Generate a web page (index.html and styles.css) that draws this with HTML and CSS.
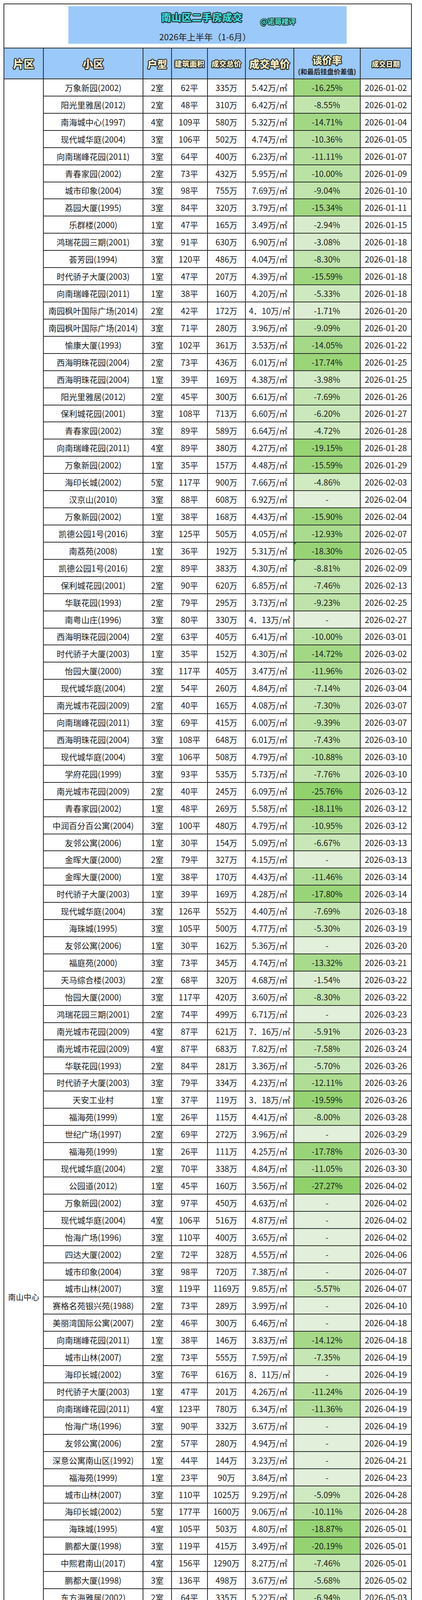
FILE: index.html
```html
<!DOCTYPE html>
<html lang="zh-CN">
<head>
<meta charset="utf-8">
<title>南山区二手房成交</title>
<link rel="stylesheet" href="styles.css">
</head>
<body>
<div class="sheet">
  <div class="grid" id="grid">
    <div class="title-cell">
      <div class="band">
        <div class="title">南山区二手房成交</div>
        <div class="sub">2026年上半年（1-6月）</div>
        <div class="handle">@诺哥楼评</div>
      </div>
    </div>
    <div class="hd"><span class="ht s27">片区</span></div>
    <div class="hd"><span class="ht s27 peach">小区</span></div>
    <div class="hd"><span class="ht s25">户型</span></div>
    <div class="hd"><span class="ht s19">建筑面积</span></div>
    <div class="hd"><span class="ht s19">成交总价</span></div>
    <div class="hd"><span class="ht s26">成交单价</span></div>
    <div class="hd hd-rate"><span class="ht s25 lh28">谈价率</span><span class="note">(和最后挂盘价差值)</span></div>
    <div class="hd"><span class="ht s18">成交日期</span></div>
    <div class="c area">南山中心</div>
  </div>
  <div class="ghost"><div></div><div></div><div></div><div></div><div></div><div></div><div></div><div></div></div>
</div>
<script src="script.js"></script>
</body>
</html>
```

FILE: styles.css
```css
* { box-sizing: border-box; }
body {
  margin: 0;
  background: #ffffff;
  font-family: "Noto Sans CJK SC", "Noto Sans", "Liberation Sans", sans-serif;
  color: #1a1a1a;
}
.sheet {
  padding: 9px 0 0 9px;
}
.grid {
  display: grid;
  grid-template-columns: 99px 253px 71px 90px 95px 122px 168px 129px;
  grid-template-rows: 111px 77px;
  grid-auto-rows: 41.93px;
  gap: 2px;
  padding: 2px;
  background: #2b2b2b;
  width: max-content;
}
.title-cell {
  grid-column: 1 / -1;
  background: #ffffff;
  padding: 5px 0 0 164px;
}
.band {
  position: relative;
  width: 712px;
  height: 96px;
  background: #9bc9f9;
  display: flex;
  flex-direction: column;
  align-items: center;
}
.title {
  margin-top: 14px;
  margin-right: 28px;
  font-size: 25px;
  line-height: 27px;
  font-weight: 900;
  letter-spacing: 1px;
  color: #3cdcdc;
  text-shadow:
    2px 0 0 #1b2323, -2px 0 0 #1b2323, 0 2px 0 #1b2323, 0 -2px 0 #1b2323,
    1.5px 1.5px 0 #1b2323, -1.5px 1.5px 0 #1b2323, 1.5px -1.5px 0 #1b2323, -1.5px -1.5px 0 #1b2323;
}
.sub {
  margin-top: 24px;
  margin-right: 12px;
  font-size: 22px;
  line-height: 24px;
  color: #222222;
}
.handle {
  position: absolute;
  left: 491px;
  top: 28px;
  font-size: 18px;
  line-height: 20px;
  font-weight: 900;
  color: #4fd8c8;
  text-shadow:
    1.5px 0 0 #1b2323, -1.5px 0 0 #1b2323, 0 1.5px 0 #1b2323, 0 -1.5px 0 #1b2323,
    1px 1px 0 #1b2323, -1px 1px 0 #1b2323, 1px -1px 0 #1b2323, -1px -1px 0 #1b2323;
}
.hd {
  background: #9bc9f9;
  display: flex;
  align-items: center;
  justify-content: center;
}
.hd-rate {
  flex-direction: column;
  justify-content: flex-start;
  padding-top: 15px;
  gap: 6px;
}
.ht {
  font-weight: 900;
  color: #f4eec2;
  white-space: nowrap;
  text-shadow:
    2px 0 0 #1c1c1c, -2px 0 0 #1c1c1c, 0 2px 0 #1c1c1c, 0 -2px 0 #1c1c1c,
    1.5px 1.5px 0 #1c1c1c, -1.5px 1.5px 0 #1c1c1c, 1.5px -1.5px 0 #1c1c1c, -1.5px -1.5px 0 #1c1c1c;
}
.peach { color: #f7e6cc; }
.s27 { font-size: 27px; }
.s26 { font-size: 26px; }
.s25 { font-size: 25px; }
.s19 { font-size: 19px; }
.s18 { font-size: 18px; }
.lh28 { line-height: 28px; }
.note {
  font-size: 17px;
  line-height: 20px;
  font-weight: 700;
  color: #222222;
  white-space: nowrap;
}
.c {
  background: #ffffff;
  display: flex;
  align-items: center;
  justify-content: center;
  font-size: 21px;
  color: #1a1a1a;
  white-space: nowrap;
}
.area {
  grid-column: 1;
  grid-row: 3 / span 142;
  font-size: 20px;
}
.rate { position: relative; }
.flag::before {
  content: "";
  position: absolute;
  top: 0;
  left: 0;
  border-top: 6px solid #1f7a3c;
  border-right: 6px solid transparent;
}
.ghost {
  display: grid;
  grid-template-columns: 99px 253px 71px 90px 95px 122px 168px 129px;
  gap: 2px;
  padding: 0 2px;
  height: 24px;
  background: #ececec;
  width: max-content;
}
.ghost div { background: #ffffff; }
```

FILE: script.js
```js
(function () {
  var data = [
    "万象新园(2002)|2|62|335|5.42|-16.25|01-02",
    "阳光里雅居(2012)|2|48|310|6.42|-8.55|01-02",
    "南海城中心(1997)|4|109|580|5.32|-14.71|01-04",
    "现代城华庭(2004)|3|106|502|4.74|-10.36|01-05",
    "向南瑞峰花园(2011)|3|64|400|6.23|-11.11|01-07",
    "青春家园(2002)|2|73|432|5.95|-10.00|01-09",
    "城市印象(2004)|3|98|755|7.69|-9.04|01-10",
    "荔园大厦(1995)|3|84|320|3.79|-15.34|01-11",
    "乐群楼(2000)|1|47|165|3.49|-2.94|01-15",
    "鸿瑞花园三期(2001)|3|91|630|6.90|-3.08|01-18",
    "荟芳园(1994)|3|120|486|4.04|-8.30|01-18",
    "时代骄子大厦(2003)|1|47|207|4.39|-15.59|01-18",
    "向南瑞峰花园(2011)|1|38|160|4.20|-5.33|01-18",
    "南园枫叶国际广场(2014)|2|42|172|4．10|-1.71|01-20",
    "南园枫叶国际广场(2014)|3|71|280|3.96|-9.09|01-20",
    "愉康大厦(1993)|3|102|361|3.53|-14.05|01-22",
    "西海明珠花园(2004)|2|73|436|6.01|-17.74|01-25",
    "西海明珠花园(2004)|1|39|169|4.38|-3.98|01-25",
    "阳光里雅居(2012)|2|45|300|6.61|-7.69|01-26",
    "保利城花园(2001)|3|108|713|6.60|-6.20|01-27",
    "青春家园(2002)|3|89|589|6.64|-4.72|01-28",
    "向南瑞峰花园(2011)|4|89|380|4.27|-19.15|01-28",
    "万象新园(2002)|1|35|157|4.48|-15.59|01-29",
    "海印长城(2002)|5|117|900|7.66|-4.86|02-03",
    "汉京山(2010)|3|88|608|6.92|-|02-04",
    "万象新园(2002)|1|38|168|4.43|-15.90|02-04",
    "凯德公园1号(2016)|3|125|505|4.05|-12.93|02-07",
    "南荔苑(2008)|1|36|192|5.31|-18.30|02-05",
    "凯德公园1号(2016)|2|89|383|4.30|-8.81|02-09",
    "保利城花园(2001)|2|90|620|6.85|-7.46|02-13",
    "华联花园(1993)|2|79|295|3.73|-9.23|02-25",
    "南粤山庄(1996)|3|80|330|4．13|-|02-27",
    "西海明珠花园(2004)|2|63|405|6.41|-10.00|03-01",
    "时代骄子大厦(2003)|1|35|152|4.30|-14.72|03-02",
    "怡园大厦(2000)|3|117|405|3.47|-11.96|03-02",
    "现代城华庭(2004)|2|54|260|4.84|-7.14|03-04",
    "南光城市花园(2009)|2|40|165|4.08|-7.30|03-07",
    "向南瑞峰花园(2011)|3|69|415|6.00|-9.39|03-07",
    "西海明珠花园(2004)|3|108|648|6.01|-7.43|03-10",
    "现代城华庭(2004)|3|106|508|4.79|-10.88|03-10",
    "学府花园(1999)|3|93|535|5.73|-7.76|03-10",
    "南光城市花园(2009)|2|40|245|6.09|-25.76|03-12",
    "青春家园(2002)|1|48|269|5.58|-18.11|03-12",
    "中润百分百公寓(2004)|3|100|480|4.79|-10.95|03-12",
    "友邻公寓(2006)|1|30|154|5.09|-6.67|03-13",
    "金晖大厦(2000)|2|79|327|4.15|-|03-13",
    "金晖大厦(2000)|1|38|170|4.43|-11.46|03-14",
    "时代骄子大厦(2003)|1|39|169|4.28|-17.80|03-14",
    "现代城华庭(2004)|3|126|552|4.40|-7.69|03-18",
    "海珠城(1995)|3|105|500|4.77|-5.30|03-19",
    "友邻公寓(2006)|1|30|162|5.36|-|03-20",
    "福庭苑(2000)|3|73|345|4.74|-13.32|03-21",
    "天马综合楼(2003)|2|68|320|4.68|-1.54|03-22",
    "怡园大厦(2000)|3|117|420|3.60|-8.30|03-22",
    "鸿瑞花园三期(2001)|2|74|499|6.71|-|03-23",
    "南光城市花园(2009)|4|87|621|7．16|-5.91|03-23",
    "南光城市花园(2009)|4|87|683|7.82|-7.58|03-24",
    "华联花园(1993)|2|84|281|3.36|-5.70|03-26",
    "时代骄子大厦(2003)|3|79|334|4.23|-12.11|03-26",
    "天安工业村|1|37|119|3．18|-19.59|03-26",
    "福海苑(1999)|1|26|115|4.41|-8.00|03-28",
    "世纪广场(1997)|2|69|272|3.96|-|03-29",
    "福海苑(1999)|1|26|111|4.25|-17.78|03-30",
    "现代城华庭(2004)|2|70|338|4.84|-11.05|03-30",
    "公园道(2012)|1|45|160|3.56|-27.27|04-02",
    "万象新园(2002)|3|97|450|4.63|-|04-02",
    "现代城华庭(2004)|4|106|516|4.87|-|04-02",
    "怡海广场(1996)|3|110|400|3.65|-|04-02",
    "四达大厦(2002)|2|72|328|4.55|-|04-06",
    "城市印象(2004)|3|98|720|7.38|-|04-07",
    "城市山林(2007)|3|119|1169|9.85|-5.57|04-07",
    "赛格名苑银兴苑(1988)|2|73|289|3.99|-|04-10",
    "美丽湾国际公寓(2007)|2|46|300|6.46|-|04-18",
    "向南瑞峰花园(2011)|1|38|146|3.83|-14.12|04-18",
    "城市山林(2007)|2|73|555|7.59|-7.35|04-19",
    "海印长城(2002)|3|76|616|8．11|-|04-19",
    "时代骄子大厦(2003)|1|47|201|4.26|-11.24|04-19",
    "向南瑞峰花园(2011)|4|123|780|6.34|-11.36|04-19",
    "怡海广场(1996)|3|90|332|3.67|-|04-19",
    "友邻公寓(2006)|2|57|280|4.94|-|04-19",
    "深意公寓南山区(1992)|1|44|144|3.23|-|04-21",
    "福海苑(1999)|1|23|90|3.84|-|04-23",
    "城市山林(2007)|3|110|1025|9.29|-5.09|04-28",
    "海印长城(2002)|5|177|1600|9.06|-10.11|04-28",
    "海珠城(1995)|4|105|503|4.80|-18.87|05-01",
    "鹏都大厦(1998)|3|119|415|3.49|-20.19|05-01",
    "中熙君南山(2017)|4|156|1290|8.27|-7.46|05-01",
    "鹏都大厦(1998)|3|136|498|3.67|-5.68|05-02",
    "东方海雅居(2002)|2|64|335|5.22|-6.94|05-03",
    "南海城中心(1997)|4|126|618|4.91|-4.92|05-05",
    "友邻公寓(2006)|1|39|203|5.22|-2.40|05-07",
    "阳光里雅居(2012)|2|47|309|6.54|-6.42|05-08",
    "金钟大厦(2003)|1|38|235|6.25|-8.91|05-09",
    "青春家园(2002)|2|68|380|5.62|-9.52|05-09",
    "福园单身公寓(1994)|1|38|108|2.84|-28.00|05-10",
    "现代城华庭(2004)|3|97|445|4.59|-5.32|05-10",
    "向南瑞峰花园(2011)|3|68|298|4.36|-3.87|05-10",
    "阳光里雅居(2012)|2|45|310|6.91|-8.88|05-10",
    "南园枫叶国际广场(2014)|2|41|173|4．17|-3.89|05-12",
    "鸿瑞花园二期(2000)|2|109|788|7.26|-5.06|05-13",
    "康乐大厦(1996)|2|77|292|3.81|-5.81|05-13",
    "鸿瑞花园三期(2001)|4|111|728|6.54|-9.00|05-16",
    "阳光里雅居(2012)|4|65|460|7.03|-7.63|05-17",
    "万象新园(2002)|3|85|431|5.08|-6.41|05-18",
    "怡海广场(1996)|3|111|394|3.54|-|05-18",
    "现代城华庭(2004)|1|53|293|5.51|-8.44|05-22",
    "南海城中心(1997)|7|225|977|4.35|-9.54|05-24",
    "万象新园(2002)|1|35|153|4.36|-9.05|05-24",
    "城市山林(2007)|2|74|513|6.94|-13.05|05-24",
    "鸿瑞花园二期(2000)|2|85|565|6.68|-11.72|05-25",
    "海印长城(2002)|3|107|780|7.30|-6.92|05-28",
    "海印长城(2002)|3|124|1066|8.59|-16.72|06-01",
    "正东名苑(2022)|-|90|815|9.06|-|06-01",
    "正东名苑(2022)|3|95|815|8.54|-4.12|06-01",
    "金钟大厦(2003)|2|67|393|5.83|-8.60|06-02",
    "向南瑞峰花园(2011)|3|64|447|6.96|-0.67|06-03",
    "海印长城(2002)|3|104|820|7.88|-7.45|06-04",
    "荔园大厦(1995)|3|84|360|4.29|-5.26|06-04",
    "山东大厦(1997)|3|132|550|4．18|-|06-05",
    "金钟大厦(2003)|1|36|261|7.23|-2.61|06-06",
    "百富大厦南山区(2004)|1|37|187|5.02|-7.88|06-07",
    "海印长城(2002)|3|106|830|7.83|-12.63|06-08",
    "华联花园(1993)|3|75|328|4.38|-10.87|06-12",
    "阳光里雅居(2012)|2|47|309|6.52|-7.82|06-13",
    "福海苑(1999)|1|23|93|3.97|-14.68|06-14",
    "中润百分百公寓(2004)|1|38|198|5.20|-13.16|06-14",
    "华侨新村(1995)|5|214|2300|10.75|-14.18|06-16",
    "公园道(2012)|2|83|340|4.08|-14.70|06-20",
    "阳光里雅居(2012)|2|46|318|6.96|-6.47|06-20",
    "光彩新世纪家园(2004)|2|73|428|5.86|-6.55|06-21",
    "金钟大厦(2003)|1|21|172|8.21|-14.00|06-21",
    "南荔苑(2008)|2|50|270|5.38|-9.70|06-21",
    "光彩新世纪家园(2004)|2|72|398|5.54|-9.34|06-22",
    "阳光里雅居(2012)|2|30|266|8.77|-15.71|06-24",
    "康乐大厦(1996)|2|41|160|3.86|-20.00|06-28",
    "南荔苑(2008)|2|50|256|5．13|-11.11|06-28",
    "海珠城(1995)|2|78|378|4.84|-18.82|06-29",
    "凯德公园1号(2016)|4|194|900|4.64|-5.26|06-29",
    "海王大厦(1994)|3|88|233|2.65|-12.15|06-30",
    "向南瑞峰花园(2011)|1|40|153|3.85|-15.00|06-30",
    "正东名苑(2022)|2|58|430|7.37|-10.42|06-30",
    "中泰天成南山一品(2011)|3|65|520|8.06|-8.45|06-30"
  ];

  var stops = [
    [0, [226, 239, 218]],
    [3, [216, 236, 205]],
    [6, [203, 232, 188]],
    [9, [192, 228, 172]],
    [12, [174, 221, 148]],
    [16, [157, 214, 124]],
    [20, [149, 211, 114]],
    [28, [144, 209, 107]]
  ];

  function colorFor(v) {
    if (v >= stops[stops.length - 1][0]) {
      var c = stops[stops.length - 1][1];
      return "rgb(" + c.join(",") + ")";
    }
    for (var i = 0; i < stops.length - 1; i++) {
      var a = stops[i], b = stops[i + 1];
      if (v >= a[0] && v <= b[0]) {
        var t = (v - a[0]) / (b[0] - a[0]);
        var r = Math.round(a[1][0] + (b[1][0] - a[1][0]) * t);
        var g = Math.round(a[1][1] + (b[1][1] - a[1][1]) * t);
        var bl = Math.round(a[1][2] + (b[1][2] - a[1][2]) * t);
        return "rgb(" + r + "," + g + "," + bl + ")";
      }
    }
    return "rgb(226,239,218)";
  }

  var flagged = { 28: true, 29: true };
  var grid = document.getElementById("grid");
  var frag = document.createDocumentFragment();

  data.forEach(function (line, idx) {
    var f = line.split("|");
    var texts = [
      f[0],
      f[1] === "-" ? "-" : f[1] + "室",
      f[2] + "平",
      f[3] + "万",
      f[4] + "万/㎡",
      f[5] === "-" ? "-" : f[5] + "%",
      "2026-" + f[6]
    ];
    texts.forEach(function (t, j) {
      var d = document.createElement("div");
      d.className = "c";
      d.textContent = t;
      if (j === 5) {
        d.className = "c rate";
        var v = f[5] === "-" ? 0 : Math.abs(parseFloat(f[5]));
        d.style.background = colorFor(v);
        if (flagged[idx + 1]) d.classList.add("flag");
      }
      frag.appendChild(d);
    });
  });
  grid.appendChild(frag);
})();
```
